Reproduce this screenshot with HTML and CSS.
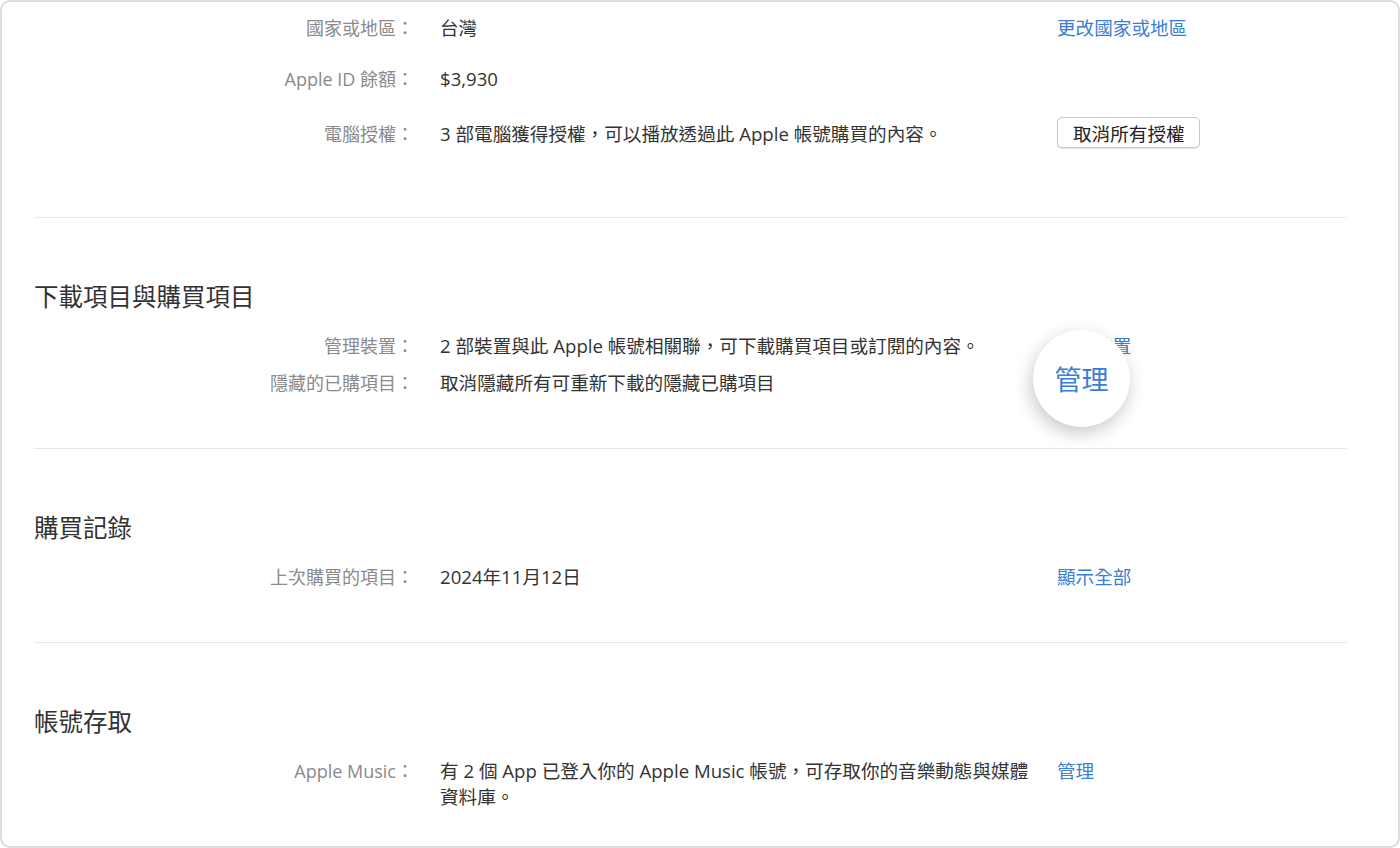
FILE: index.html
```html
<!DOCTYPE html>
<html lang="zh-Hant">
<head>
    <meta charset="UTF-8">
    <meta name="viewport" content="width=device-width, initial-scale=1.0">
    <title>帳號資訊</title>
    <link rel="stylesheet" href="styles.css">
</head>
<body>
    <div class="frame">
        <div class="content">
            <section class="section section-top">
                <div class="row">
                    <div class="label">國家或地區：</div>
                    <div class="value">台灣</div>
                    <div class="action"><a href="#" class="link">更改國家或地區</a></div>
                </div>
                <div class="row">
                    <div class="label">Apple ID 餘額：</div>
                    <div class="value">$3,930</div>
                    <div class="action"></div>
                </div>
                <div class="row">
                    <div class="label">電腦授權：</div>
                    <div class="value">3 部電腦獲得授權，可以播放透過此 Apple 帳號購買的內容。</div>
                    <div class="action"><button class="btn">取消所有授權</button></div>
                </div>
            </section>

            <section class="section">
                <h2 class="section-title">下載項目與購買項目</h2>
                <div class="rows">
                    <div class="row">
                        <div class="label">管理裝置：</div>
                        <div class="value">2 部裝置與此 Apple 帳號相關聯，可下載購買項目或訂閱的內容。</div>
                        <div class="action"><a href="#" class="link">管理裝置</a></div>
                    </div>
                    <div class="row">
                        <div class="label">隱藏的已購項目：</div>
                        <div class="value">取消隱藏所有可重新下載的隱藏已購項目</div>
                        <div class="action"></div>
                    </div>
                </div>
                <a href="#" class="bubble">管理</a>
            </section>

            <section class="section">
                <h2 class="section-title">購買記錄</h2>
                <div class="rows">
                    <div class="row">
                        <div class="label">上次購買的項目：</div>
                        <div class="value">2024年11月12日</div>
                        <div class="action"><a href="#" class="link">顯示全部</a></div>
                    </div>
                </div>
            </section>

            <section class="section section-last">
                <h2 class="section-title">帳號存取</h2>
                <div class="rows">
                    <div class="row">
                        <div class="label">Apple Music：</div>
                        <div class="value">有 2 個 App 已登入你的 Apple Music 帳號，可存取你的音樂動態與媒體資料庫。</div>
                        <div class="action"><a href="#" class="link">管理</a></div>
                    </div>
                </div>
            </section>
        </div>
    </div>
</body>
</html>
```

FILE: styles.css
```css
body {
    margin: 0;
    background-color: #fff;
    font-family: "Open Sans", "Noto Sans CJK TC", sans-serif;
    color: #333;
}

.frame {
    height: 848px;
    box-sizing: border-box;
    border: 2px solid #dcdcdc;
    border-radius: 10px;
    overflow: hidden;
    background-color: #fff;
}

.content {
    padding: 0 51px 0 32px;
}

.section {
    position: relative;
    padding: 63px 0 52px;
    border-bottom: 1px solid #e8e8e8;
}

.section-top {
    display: flex;
    flex-direction: column;
    gap: 25px;
    padding: 13px 0 69px;
}

.section-last {
    border-bottom: none;
}

.section-title {
    margin: 0 0 20px;
    font-size: 24.5px;
    line-height: 32px;
    font-weight: 400;
    color: #333;
}

.rows {
    display: flex;
    flex-direction: column;
    gap: 11px;
}

.row {
    display: grid;
    grid-template-columns: 380px 590px 1fr;
    column-gap: 26px;
    align-items: baseline;
    line-height: 26px;
}

.label {
    text-align: right;
    font-size: 18px;
    color: #8a8a8a;
}

.value {
    font-size: 18.6px;
    color: #333;
}

.action {
    margin-left: 1px;
    font-size: 18.6px;
}

.link {
    color: #3b7dd4;
    text-decoration: none;
}

.btn {
    height: 31px;
    padding: 0 14px 0 15px;
    border: 1px solid #c8c8c8;
    border-radius: 5px;
    background-color: #fff;
    box-shadow: 0 1px 1px rgba(0, 0, 0, 0.12);
    font-family: inherit;
    font-size: 18.6px;
    color: #222;
}

.bubble {
    position: absolute;
    left: 999px;
    top: 112px;
    width: 97px;
    height: 97px;
    border-radius: 50%;
    background-color: #fff;
    box-shadow: -2px 6px 18px rgba(0, 0, 0, 0.22);
    display: flex;
    align-items: center;
    justify-content: center;
    font-size: 27px;
    color: #3b7dd4;
    text-decoration: none;
}
```
